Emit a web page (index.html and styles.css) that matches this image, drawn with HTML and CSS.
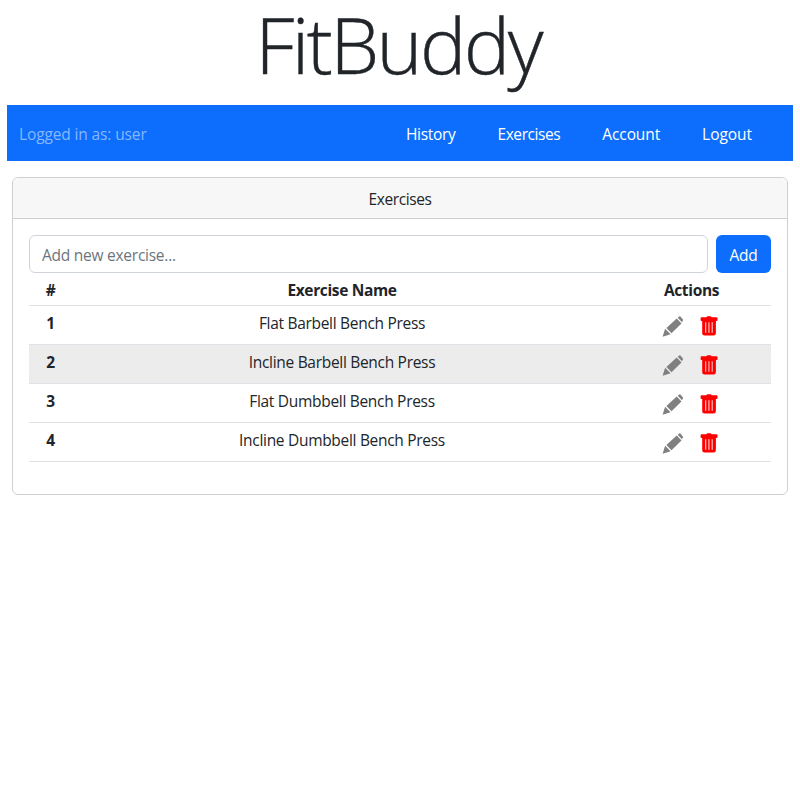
FILE: index.html
```html
<!DOCTYPE html>
<html lang="en">
<head>
<meta charset="utf-8">
<title>FitBuddy</title>
<link rel="stylesheet" href="styles.css">
</head>
<body>
<svg class="sprite" aria-hidden="true">
  <symbol id="pencil" viewBox="0 0 22 22">
    <path d="M.6 20.800 3.100 12.800l5.500 5.500zM4.400 11.900 14.700 2.500l4.800 4.900L9.500 17.200zM15.700 1.700l1.500-1.300q.6-.4 1.200.1l2.500 2.900q.5.6 0 1.200l-.9 1.600z"/>
  </symbol>
  <symbol id="trash" viewBox="0 0 18 20">
    <path fill-rule="evenodd" d="M6.500 1.200Q6.700.3 7.500.3h3q.8 0 1 .9h5q1 0 1 1v2q0 .8-1 .8h-.6V17q0 2.500-2.400 2.500H4.700Q2.200 19.500 2.200 17V5h-.6q-1 0-1-.8v-2q0-1 1-1zM5.300 6.200v10.600h.9V6.200zM8.500 6.200v10.600h.9V6.200zM11.700 6.200v10.600h.9V6.200z"/>
  </symbol>
</svg>
<h1 class="title">FitBuddy</h1>
<nav class="navbar">
  <span class="user">Logged in as: user</span>
  <div class="links">
    <a class="history">History</a>
    <a class="exercises">Exercises</a>
    <a class="account">Account</a>
    <a class="logout">Logout</a>
  </div>
</nav>
<main class="card">
  <header class="card-header">Exercises</header>
  <div class="card-body">
    <form class="add-form">
      <input type="text" placeholder="Add new exercise...">
      <button type="button">Add</button>
    </form>
    <table>
      <thead>
        <tr><th class="num">#</th><th class="name">Exercise Name</th><th class="act">Actions</th></tr>
      </thead>
      <tbody>
        <tr><th>1</th><td>Flat Barbell Bench Press</td><td><div class="actions"><svg class="edit"><use href="#pencil"/></svg><svg class="delete"><use href="#trash"/></svg></div></td></tr>
        <tr class="active"><th>2</th><td>Incline Barbell Bench Press</td><td><div class="actions"><svg class="edit"><use href="#pencil"/></svg><svg class="delete"><use href="#trash"/></svg></div></td></tr>
        <tr><th>3</th><td>Flat Dumbbell Bench Press</td><td><div class="actions"><svg class="edit"><use href="#pencil"/></svg><svg class="delete"><use href="#trash"/></svg></div></td></tr>
        <tr><th>4</th><td>Incline Dumbbell Bench Press</td><td><div class="actions"><svg class="edit"><use href="#pencil"/></svg><svg class="delete"><use href="#trash"/></svg></div></td></tr>
      </tbody>
    </table>
  </div>
</main>
</body>
</html>
```
FILE: styles.css
```css
* { box-sizing: border-box; }
body {
  margin: 0;
  font: 15.5px/24px "Open Sans", "Noto Sans", sans-serif;
  letter-spacing: -0.3px;
  color: #212529;
  background: #fff;
}
.sprite { display: none; }
.title {
  margin: 0;
  height: 105px;
  padding-right: 4px;
  font-size: 78px;
  font-weight: 300;
  line-height: 88px;
  letter-spacing: -2.6px;
  text-align: center;
  -webkit-text-stroke: 0.4px currentColor;
}
.navbar {
  display: flex;
  justify-content: space-between;
  height: 56px;
  margin: 0 7px;
  padding: 17px 41px 0 12px;
  background: #0d6efd;
  color: #fff;
}
.user { color: #86b7fe; letter-spacing: -0.13px; }
.links { display: flex; gap: 42px; }
.exercises { letter-spacing: -0.42px; }
.account { letter-spacing: -0.1px; }
.logout { letter-spacing: -0.05px; }
.card {
  height: 318px;
  margin: 16px 12px 0;
  border: 1px solid #d0d0d0;
  border-radius: 6px;
  overflow: hidden;
}
.card-header {
  height: 41px;
  padding-top: 9px;
  background: #f7f7f7;
  border-bottom: 1px solid #d0d0d0;
  text-align: center;
  letter-spacing: -0.42px;
}
.card-body { padding: 16px; }
.add-form { display: flex; gap: 8px; }
.add-form input, .add-form button {
  height: 38px;
  font: inherit;
  letter-spacing: -0.25px;
  border-radius: 6px;
}
.add-form input {
  flex: 1;
  min-width: 0;
  padding: 3px 12px 1px;
  border: 1px solid #ced4da;
}
.add-form input::placeholder { color: #6c757d; opacity: 1; }
.add-form button {
  width: 55px;
  padding: 2px 0 0;
  border: 0;
  background: #0d6efd;
  color: #fff;
}
table {
  width: 100%;
  table-layout: fixed;
  border-collapse: separate;
  border-spacing: 0;
  text-align: center;
}
th, td {
  height: 39px;
  padding: 0 0 4px;
  border-bottom: 1px solid #dee2e6;
}
thead th { height: 33px; padding: 1px 0 0; }
th { font-weight: 700; letter-spacing: -0.35px; }
.num { width: 43px; }
.act { width: 159px; }
.active > * { background: #ececec; }
.actions {
  display: flex;
  justify-content: center;
  align-items: flex-start;
  gap: 16px;
  height: 22px;
  padding-right: 3px;
  margin-top: 7px;
}
.edit { width: 22px; height: 22px; fill: #808080; }
.delete { width: 18px; height: 20px; fill: #f00; }
```
